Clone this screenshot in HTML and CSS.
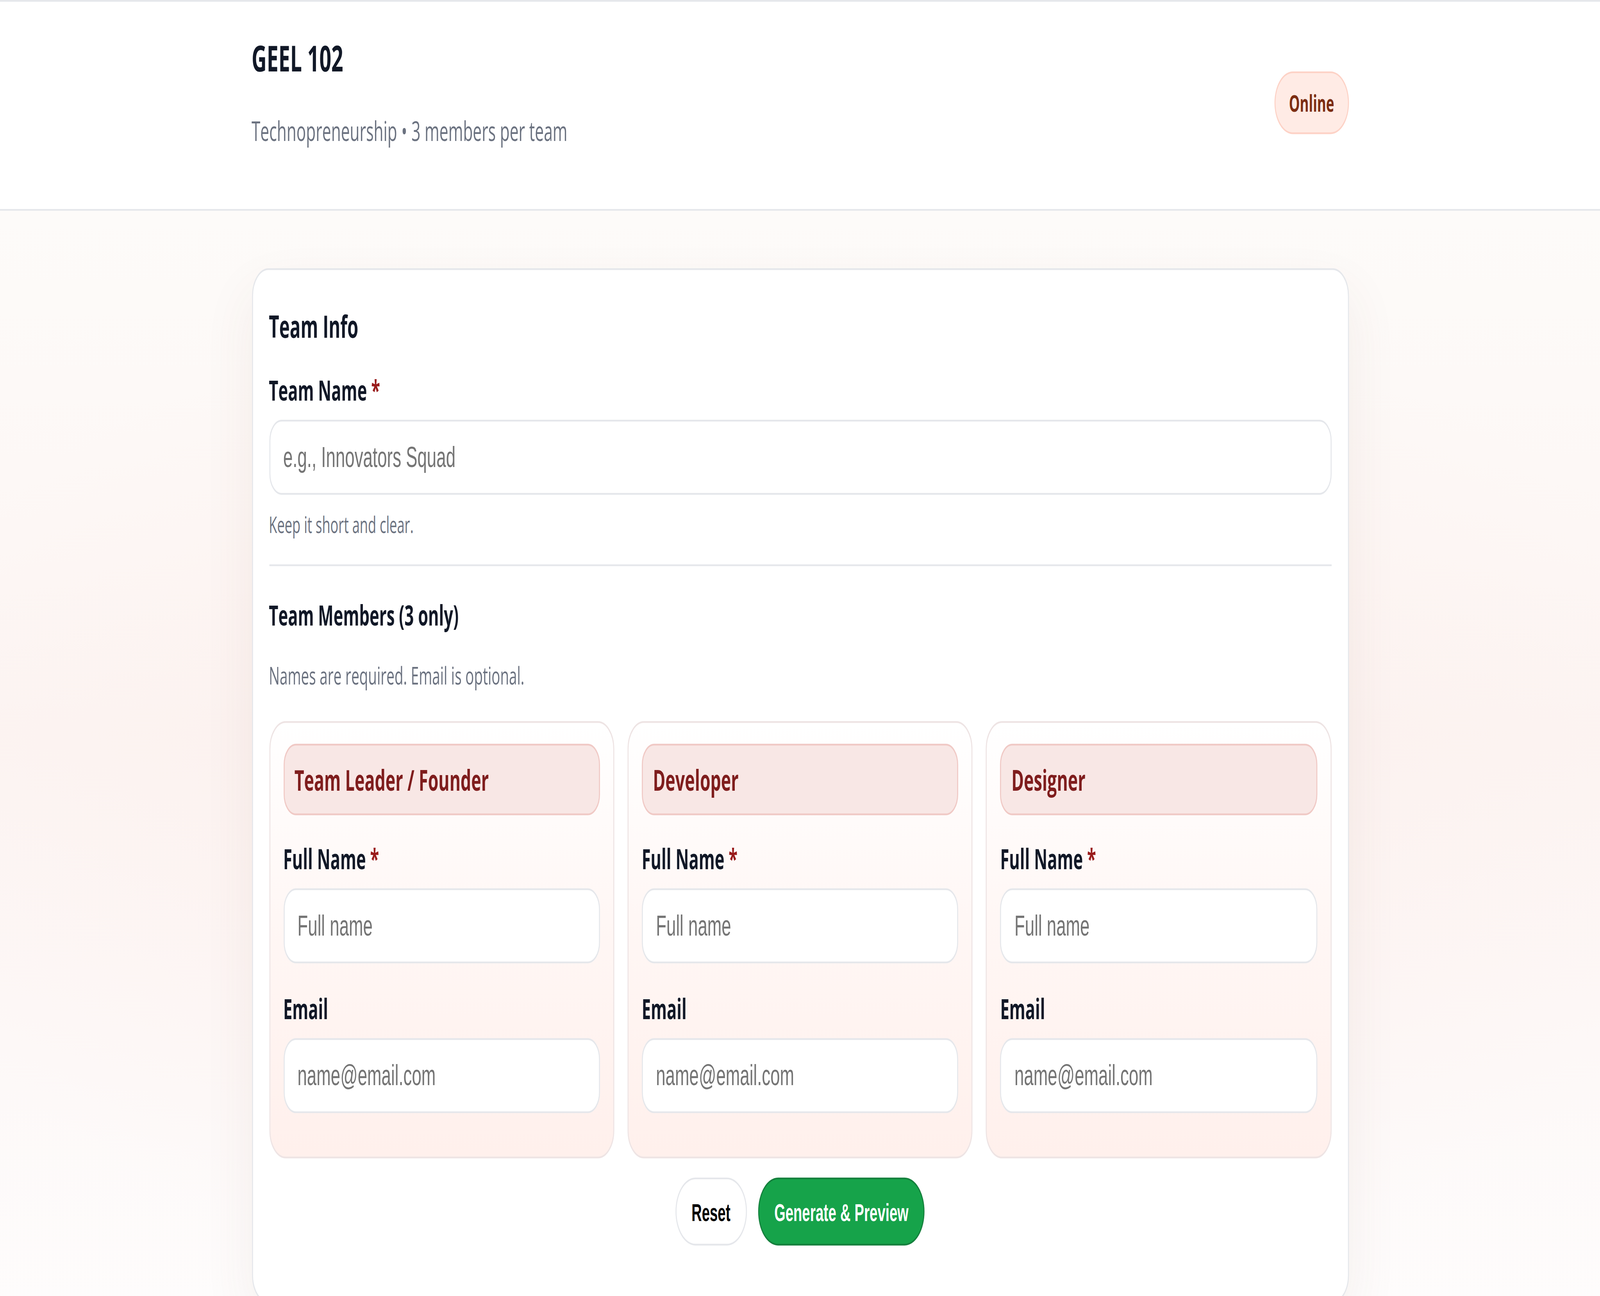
FILE: index.html
```html
<!DOCTYPE html>
<html lang="en">
<head>
<meta charset="utf-8">
<title>GEEL 102 – Team Registration</title>
<link rel="stylesheet" href="styles.css">
</head>
<body>
<div class="frame">
<div class="stage">
  <header class="topbar">
    <div class="wrap topbar-inner">
      <div class="course">
        <h1 class="course-code">GEEL 102</h1>
        <p class="course-sub">Technopreneurship • 3 members per team</p>
      </div>
      <span class="mode-pill">Online</span>
    </div>
  </header>

  <main class="page">
    <section class="wrap card">
      <h2 class="card-title">Team Info</h2>

      <label class="label" for="team-name">Team Name <span class="req">*</span></label>
      <input class="field" id="team-name" type="text" placeholder="e.g., Innovators Squad">
      <p class="help">Keep it short and clear.</p>

      <hr class="divider">

      <h3 class="section-title">Team Members (3 only)</h3>
      <p class="section-note">Names are required. Email is optional.</p>

      <div class="members">
        <div class="member">
          <div class="role">Team Leader / Founder</div>
          <label class="label label-first">Full Name <span class="req">*</span></label>
          <input class="field" type="text" placeholder="Full name">
          <label class="label label-next">Email</label>
          <input class="field" type="email" placeholder="name@email.com">
        </div>
        <div class="member">
          <div class="role">Developer</div>
          <label class="label label-first">Full Name <span class="req">*</span></label>
          <input class="field" type="text" placeholder="Full name">
          <label class="label label-next">Email</label>
          <input class="field" type="email" placeholder="name@email.com">
        </div>
        <div class="member">
          <div class="role">Designer</div>
          <label class="label label-first">Full Name <span class="req">*</span></label>
          <input class="field" type="text" placeholder="Full name">
          <label class="label label-next">Email</label>
          <input class="field" type="email" placeholder="name@email.com">
        </div>
      </div>

      <div class="actions">
        <button class="btn btn-reset" type="button">Reset</button>
        <button class="btn btn-primary" type="button">Generate &amp; Preview</button>
      </div>
    </section>
  </main>
</div>
</div>
<script src="app.js"></script>
</body>
</html>
```

FILE: styles.css
```css
html,
body {
  height: 100%;
}

html {
  overflow: hidden;
  background: #ffffff;
}

body {
  margin: 0;
  font-family: "Open Sans", "Noto Sans", Arial, sans-serif;
  color: #111827;
}

/* Full-window frame that holds the scaled design canvas */
.frame {
  width: 100vw;
  height: 100vh;
  overflow: hidden;
  background: #fffdfc;
}

/* Design canvas: 1568 x 744, scaled to fill the window */
.stage {
  width: 1568px;
  height: 744px;
  overflow: hidden;
  transform-origin: 0 0;
  transform: scale(var(--sx, 2.6122), var(--sy, 4.461));
  background: #fffdfc;
}

.wrap {
  width: 1075px;
  margin: 0 auto;
  box-sizing: border-box;
}

/* Header */
.topbar {
  background: #ffffff;
  border-top: 1px solid #e5e7eb;
  border-bottom: 1px solid #e5e7eb;
}

.topbar-inner {
  display: flex;
  justify-content: space-between;
  align-items: flex-start;
  padding: 19px 0 34px;
}

.course-code {
  margin: 0;
  font-size: 20.5px;
  line-height: 26px;
  font-weight: 700;
  color: #111827;
}

.course-sub {
  margin: 18px 0 0;
  font-size: 15.6px;
  line-height: 22px;
  color: #6b7280;
}

.mode-pill {
  margin-top: 21px;
  height: 36px;
  box-sizing: border-box;
  padding: 0 13px;
  display: inline-flex;
  align-items: center;
  border-radius: 999px;
  background: #ffebe5;
  border: 1px solid #fdd2c6;
  color: #7c2d12;
  font-size: 13.4px;
  font-weight: 700;
}

/* Page */
.page {
  padding: 33px 0 40px;
  background:
    radial-gradient(ellipse 60% 45% at 50% 50%, rgba(252, 236, 232, 0.55), rgba(252, 236, 232, 0) 100%),
    linear-gradient(180deg, #fdfbf9 0%, #fdf7f5 30%, #fcf4f2 45%, #fdf8f7 70%, #fefdfd 100%);
}

.card {
  background: #ffffff;
  border: 1px solid #e5e7eb;
  border-radius: 16px;
  padding: 20px 16px 32px;
  box-shadow: 0 12px 40px rgba(120, 70, 60, 0.07);
}

.card-title {
  margin: 0;
  font-size: 17.5px;
  line-height: 24px;
  font-weight: 700;
}

.label {
  display: block;
  font-size: 16px;
  line-height: 22px;
  font-weight: 700;
  color: #111827;
}

.card-title + .label {
  margin-top: 14px;
}

.req {
  color: #991b1b;
}

.field {
  display: block;
  width: 100%;
  box-sizing: border-box;
  height: 43px;
  margin-top: 6px;
  padding: 0 13px;
  border: 1px solid #e5e7eb;
  border-radius: 12px;
  background: #ffffff;
  font-family: "Liberation Sans", Arial, sans-serif;
  font-size: 16.8px;
  color: #111827;
  outline: none;
}

.field::placeholder {
  color: #757575;
}

.help {
  margin: 8px 0 0;
  font-size: 13.2px;
  line-height: 18px;
  color: #6b7280;
}

.divider {
  margin: 14px 0 0;
  border: 0;
  border-top: 1px solid #e5e7eb;
}

.section-title {
  margin: 17px 0 0;
  font-size: 16px;
  line-height: 22px;
  font-weight: 700;
}

.section-note {
  margin: 14px 0 0;
  font-size: 14.1px;
  line-height: 20px;
  color: #6b7280;
}

/* Members */
.members {
  margin-top: 16px;
  display: grid;
  grid-template-columns: repeat(3, 1fr);
  gap: 13px;
}

.member {
  border: 1px solid #eee4e4;
  border-radius: 16px;
  padding: 12px 13px 25px;
  background: linear-gradient(180deg, #ffffff 0%, #fff7f5 45%, #fff0ec 100%);
}

.role {
  height: 41px;
  box-sizing: border-box;
  display: flex;
  align-items: center;
  padding: 0 10px;
  border: 1px solid #f0c9c5;
  border-radius: 12px;
  background: #f8e7e5;
  color: #7f1d1d;
  font-size: 16.5px;
  font-weight: 700;
}

.label-first {
  margin-top: 14px;
}

.label-next {
  margin-top: 15px;
}

/* Actions */
.actions {
  margin-top: 11px;
  display: flex;
  justify-content: center;
  gap: 11px;
}

.btn {
  height: 39px;
  padding: 0 15px;
  border-radius: 999px;
  font-family: "Liberation Sans", Arial, sans-serif;
  font-size: 14px;
  font-weight: 700;
  cursor: pointer;
}

.btn-reset {
  background: #ffffff;
  border: 1px solid #e5e7eb;
  color: #000000;
}

.btn-primary {
  background: #16a34a;
  border: 1px solid #15803d;
  color: #ffffff;
}
```

FILE: app.js
```js
(function () {
  var root = document.documentElement;
  function fit() {
    root.style.setProperty('--sx', String(window.innerWidth / 1568));
    root.style.setProperty('--sy', String(window.innerHeight / 744));
  }
  fit();
  window.addEventListener('resize', fit);
})();
```
